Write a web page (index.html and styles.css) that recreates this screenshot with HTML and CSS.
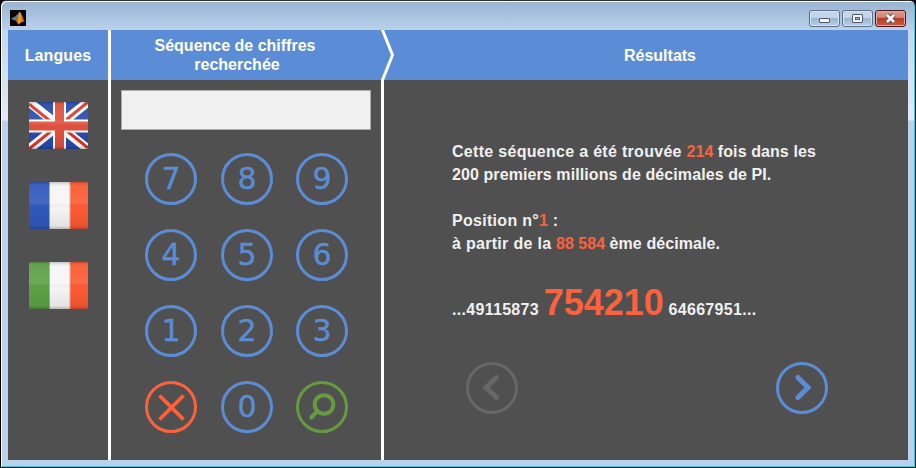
FILE: index.html
```html
<!DOCTYPE html>
<html lang="fr">
<head>
<meta charset="utf-8">
<title>Décimales de PI</title>
<link rel="stylesheet" href="styles.css">
</head>
<body>
<div class="window">
  <div class="titlebar">
    <svg class="logo" viewBox="0 0 16 16">
      <defs><linearGradient id="flame" x1="0" x2="1"><stop offset="0" stop-color="#8a2c12"/><stop offset=".5" stop-color="#f5a52a"/><stop offset="1" stop-color="#b5300f"/></linearGradient></defs>
      <rect width="16" height="16" fill="#000"/>
      <path d="M1 8.5 5 6.7 9.5 2 7.5 7.5 4.5 10.5Z" fill="#3d91ad"/>
      <path d="M4.3 10.5Q7.3 8.6 9.8 1.3 11.7 4.7 15 12.2 11.8 10.4 8.2 14.8 6.6 10.4 4.3 10.5Z" fill="url(#flame)"/>
    </svg>
    <div class="controls">
      <span class="control"><svg viewBox="0 0 31 17"><rect x="10.5" y="8.5" width="10" height="4" rx=".5" fill="#f5f5f5" stroke="#545867"/></svg></span>
      <span class="control"><svg viewBox="0 0 31 17"><rect x="10.5" y="4.5" width="10" height="8" rx=".5" fill="#f5f5f5" stroke="#545867"/><rect x="13.5" y="7.5" width="4" height="2" fill="#9ebce0" stroke="#545867"/></svg></span>
      <span class="control close"><svg viewBox="0 0 31 17"><path d="m12 5 7 7m0-7-7 7" stroke="#545867" stroke-width="5"/><path d="m12 5 7 7m0-7-7 7" stroke="#f8f8f8" stroke-width="2.7"/></svg></span>
    </div>
  </div>
  <main class="content">
    <section class="languages">
      <h2 class="heading">Langues</h2>
      <div class="flags">
        <svg class="flag" viewBox="0 0 59 47">
          <defs><linearGradient id="shine" x2="0" y2="1"><stop offset="0" stop-opacity=".2"/><stop offset=".1" stop-color="#fff" stop-opacity=".05"/><stop offset=".45" stop-color="#fff" stop-opacity=".1"/><stop offset=".55" stop-opacity="0"/><stop offset=".93" stop-opacity=".07"/><stop offset="1" stop-opacity=".25"/></linearGradient></defs>
          <rect width="59" height="47" fill="#294baf"/>
          <path d="m0 0 59 47M59 0 0 47" stroke="#fff" stroke-width="9"/>
          <path d="m0 2 26 21M59 0 32 22M59 46 33 25M0 47l26-21" stroke="#d93b2b" stroke-width="3"/>
          <path d="M30.5 0v47M0 24h59" stroke="#fff" stroke-width="13"/>
          <path d="M30.5 0v47M0 24h59" stroke="#e1513d" stroke-width="9"/>
          <rect width="59" height="47" fill="url(#shine)"/>
        </svg>
        <svg class="flag" viewBox="0 0 59 47"><rect width="21" height="47" fill="#3158bc"/><rect x="21" width="20" height="47" fill="#f5f5f5"/><rect x="41" width="18" height="47" fill="#fc5a33"/><path d="M20.5 0v47" stroke="#91a7e0"/><path d="M41 0v47" stroke="#efa393"/><rect width="59" height="47" fill="url(#shine)"/></svg>
        <svg class="flag" viewBox="0 0 59 47"><rect width="21" height="47" fill="#5da147"/><rect x="21" width="20" height="47" fill="#f5f5f5"/><rect x="41" width="18" height="47" fill="#fc5a33"/><path d="M20.5 0v47" stroke="#8fbd80"/><path d="M41 0v47" stroke="#efa393"/><rect width="59" height="47" fill="url(#shine)"/></svg>
      </div>
    </section>
    <section class="search">
      <h2 class="heading"><span class="first-line">Séquence de chiffres</span><span>recherchée</span></h2>
      <svg class="chevron" viewBox="0 0 17 50"><path d="M1.5-2v2L11.5 25 1.5 50v2" fill="none" stroke="#fff" stroke-width="3"/></svg>
      <div class="field"></div>
      <div class="keypad">
        <span class="key">7</span><span class="key">8</span><span class="key">9</span>
        <span class="key">4</span><span class="key">5</span><span class="key">6</span>
        <span class="key">1</span><span class="key">2</span><span class="key">3</span>
        <span class="key clear"><svg viewBox="0 0 52 52"><path d="m14.5 14.5 24 24m0-24-24 24" stroke="currentColor" stroke-width="3.8"/></svg></span>
        <span class="key">0</span>
        <span class="key find"><svg viewBox="0 0 52 52"><circle cx="28" cy="23.5" r="9.3" fill="none" stroke="currentColor" stroke-width="4"/><path d="m21.5 30-6.2 6.5" stroke="currentColor" stroke-width="4.2" stroke-linecap="round"/></svg></span>
      </div>
    </section>
    <section class="results">
      <h2 class="heading">Résultats</h2>
      <div class="message">
        <p><span class="wide">Cette séquence a été trouvée </span><b>214</b><span class="snug"> fois dans les</span><br><span class="snug">200 premiers millions de décimales de PI.</span></p>
        <p><span class="wide">Position n°</span><b>1</b><span class="wide"> :</span><br><span class="wide">à partir de la </span><b>88 584</b><span class="snug"> ème décimale.</span></p>
        <p class="digits"><span class="wide">...49115873 </span><b>754210</b><span class="wide"> 64667951...</span></p>
      </div>
      <div class="pager">
        <span class="key disabled"><svg viewBox="0 0 52 52"><path d="M30.5 15.5 20 25.5l10.5 10" fill="none" stroke="currentColor" stroke-width="5" stroke-linecap="round"/></svg></span>
        <span class="key"><svg viewBox="0 0 52 52"><path d="m21.8 15.5 10.3 10-10.3 10" fill="none" stroke="currentColor" stroke-width="5" stroke-linecap="round"/></svg></span>
      </div>
    </section>
  </main>
</div>
</body>
</html>
```
FILE: styles.css
```css
* { box-sizing: border-box; }
body {
  margin: 0;
  width: 916px;
  height: 468px;
  overflow: hidden;
  background: #000;
  font: bold 16px/23px "Liberation Sans", Arial, sans-serif;
  color: #f0f0f0;
}
.window {
  height: 468px;
  padding: 0 6px;
  border: 1px solid #000;
  border-top-color: #302c34;
  border-radius: 6px 6px 0 0;
  background:
    linear-gradient(#99b4d1, #b9d1ea 29px, transparent 29px),
    linear-gradient(#b9d1ea, #e3ebf6 119px, #b9d1ea 120px);
  box-shadow: inset 1px 1px #fafcff, inset -1px -1px #28cfe5;
}
.titlebar {
  display: flex;
  justify-content: space-between;
  height: 29px;
  padding: 9px 3px 0 3px;
}
.logo { width: 16px; height: 16px; }
.controls { display: flex; gap: 2px; }
.control {
  width: 31px;
  height: 17px;
  border: 1px solid #5e6f87;
  border-radius: 3px;
  background: linear-gradient(#c2d5e9 48%, #9bb6d3 50%, #b8d0e9);
  box-shadow: inset 0 0 0 1px #d5e4f3;
}
.control svg { display: block; width: 31px; height: 17px; margin: -1px; }
.close {
  border-color: #4b1720;
  background: linear-gradient(#dda196, #d37b69 46%, #b93c24 50%, #c95d43);
  box-shadow: inset 0 0 0 1px #e5a69b;
}
.content {
  display: grid;
  grid-template-columns: 103px 273px 524px;
  width: 900px;
  height: 430px;
  margin-left: 1px;
  background: #505050;
}
.heading {
  display: flex;
  flex-direction: column;
  align-items: center;
  justify-content: center;
  height: 50px;
  margin: 0;
  background: #5b8dd6;
  color: #fff;
  font-size: 16px;
  line-height: 19px;
}
.languages { border-right: 3px solid #fff; }
.languages .heading { letter-spacing: .1px; }
.flags {
  display: flex;
  flex-direction: column;
  align-items: center;
  gap: 33px;
  padding-top: 22px;
}
.flag { width: 59px; height: 47px; }
.search { position: relative; border-right: 3px solid #fff; }
.search .heading { padding-right: 18px; }
.first-line { margin-right: 4px; }
.chevron {
  position: absolute;
  top: 0;
  right: -17px;
  width: 17px;
  height: 50px;
  background: #5b8dd6;
}
.field {
  height: 40px;
  margin: 10px 10px 0;
  border: 1px solid #ababab;
  background: #f0f0f0;
}
.keypad {
  display: grid;
  grid-template-columns: 76px 75px 52px;
  row-gap: 24px;
  margin: 23px 0 0 34px;
}
.key {
  display: flex;
  align-items: center;
  justify-content: center;
  width: 52px;
  height: 52px;
  border: 3px solid currentColor;
  border-radius: 50%;
  color: #5b8dd6;
  font: 30px/46px "DejaVu Sans", Verdana, sans-serif;
  -webkit-text-stroke: .4px;
}
.key svg { flex: none; width: 52px; height: 52px; }
.clear { color: #fc623c; }
.find { color: #649b3f; }
.disabled { color: #676767; }
.results .heading { padding-left: 28px; }
.message { padding: 60px 0 0 68px; }
.message p { margin: 0 0 23px; }
.message b { color: #fc623c; }
.wide { letter-spacing: .3px; }
.snug { letter-spacing: .09px; }
.message .digits { margin: 0; line-height: 50px; }
.digits b { font-size: 36px; }
.pager {
  display: flex;
  justify-content: space-between;
  margin: 27px 80px 0 82px;
}
```
